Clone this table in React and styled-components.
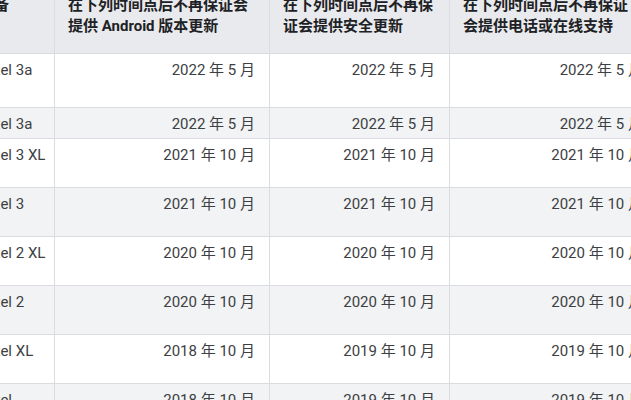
import React from 'react';
import styled, { createGlobalStyle } from 'styled-components';

const GlobalStyle = createGlobalStyle`
  html, body {
    margin: 0;
    padding: 0;
    background: #ffffff;
    overflow: hidden;
  }
  body {
    font-family: Roboto, "Noto Sans CJK SC", sans-serif;
  }
`;

// Tabela cortada: a primeira coluna e o cabeçalho ficam parcialmente fora da tela
const Viewport = styled.div`
  width: 631px;
  height: 400px;
  overflow: hidden;
`;

const Table = styled.div`
  margin-left: -34px;
  margin-top: -19px;
  width: 692px;
`;

const Row = styled.div`
  display: grid;
  grid-template-columns: 89px 215px 180px 208px;
  height: ${({ $h }) => $h}px;
  box-sizing: border-box;
  border-bottom: 1px solid #dadce0;
  background: ${({ $bg }) => $bg};
`;

const HeadCell = styled.div`
  box-sizing: border-box;
  padding: 14px 14px 0 13px;
  border-right: 1px solid #dadce0;
  font-size: 15px;
  line-height: 21px;
  font-weight: 700;
  color: #202124;
  white-space: nowrap;
`;

const Cell = styled.div`
  box-sizing: border-box;
  padding: 6px 14px 0 13px;
  border-right: 1px solid #dadce0;
  font-size: 15px;
  line-height: 21px;
  color: #3c4043;
  text-align: ${({ $align }) => $align || 'right'};
  white-space: nowrap;
`;

const NameCell = styled(Cell)`
  padding-left: 14px;
`;

const rows = [
  { name: 'Pixel 3a', h: 54, dates: ['2022 年 5 月', '2022 年 5 月', '2022 年 5 月'] },
  { name: 'Pixel 3a', h: 31, dates: ['2022 年 5 月', '2022 年 5 月', '2022 年 5 月'] },
  { name: 'Pixel 3 XL', h: 49, dates: ['2021 年 10 月', '2021 年 10 月', '2021 年 10 月'] },
  { name: 'Pixel 3', h: 49, dates: ['2021 年 10 月', '2021 年 10 月', '2021 年 10 月'] },
  { name: 'Pixel 2 XL', h: 49, dates: ['2020 年 10 月', '2020 年 10 月', '2020 年 10 月'] },
  { name: 'Pixel 2', h: 49, dates: ['2020 年 10 月', '2020 年 10 月', '2020 年 10 月'] },
  { name: 'Pixel XL', h: 49, dates: ['2018 年 10 月', '2019 年 10 月', '2019 年 10 月'] },
  { name: 'Pixel', h: 49, dates: ['2018 年 10 月', '2019 年 10 月', '2019 年 10 月'] },
];

function App() {
  return (
    <>
      <GlobalStyle />
      <Viewport>
        <Table>
          <Row $h={73} $bg="#e8eaed">
            <HeadCell>设备</HeadCell>
            <HeadCell>
              在下列时间点后不再保证会
              <br />
              提供 Android 版本更新
            </HeadCell>
            <HeadCell>
              在下列时间点后不再保
              <br />
              证会提供安全更新
            </HeadCell>
            <HeadCell>
              在下列时间点后不再保证
              <br />
              会提供电话或在线支持
            </HeadCell>
          </Row>
          {rows.map((r, i) => (
            <Row key={i} $h={r.h} $bg={i % 2 === 0 ? '#ffffff' : '#f1f3f4'}>
              <NameCell $align="left">{r.name}</NameCell>
              {r.dates.map((d, j) => (
                <Cell key={j}>{d}</Cell>
              ))}
            </Row>
          ))}
        </Table>
      </Viewport>
    </>
  );
}

export default App;
